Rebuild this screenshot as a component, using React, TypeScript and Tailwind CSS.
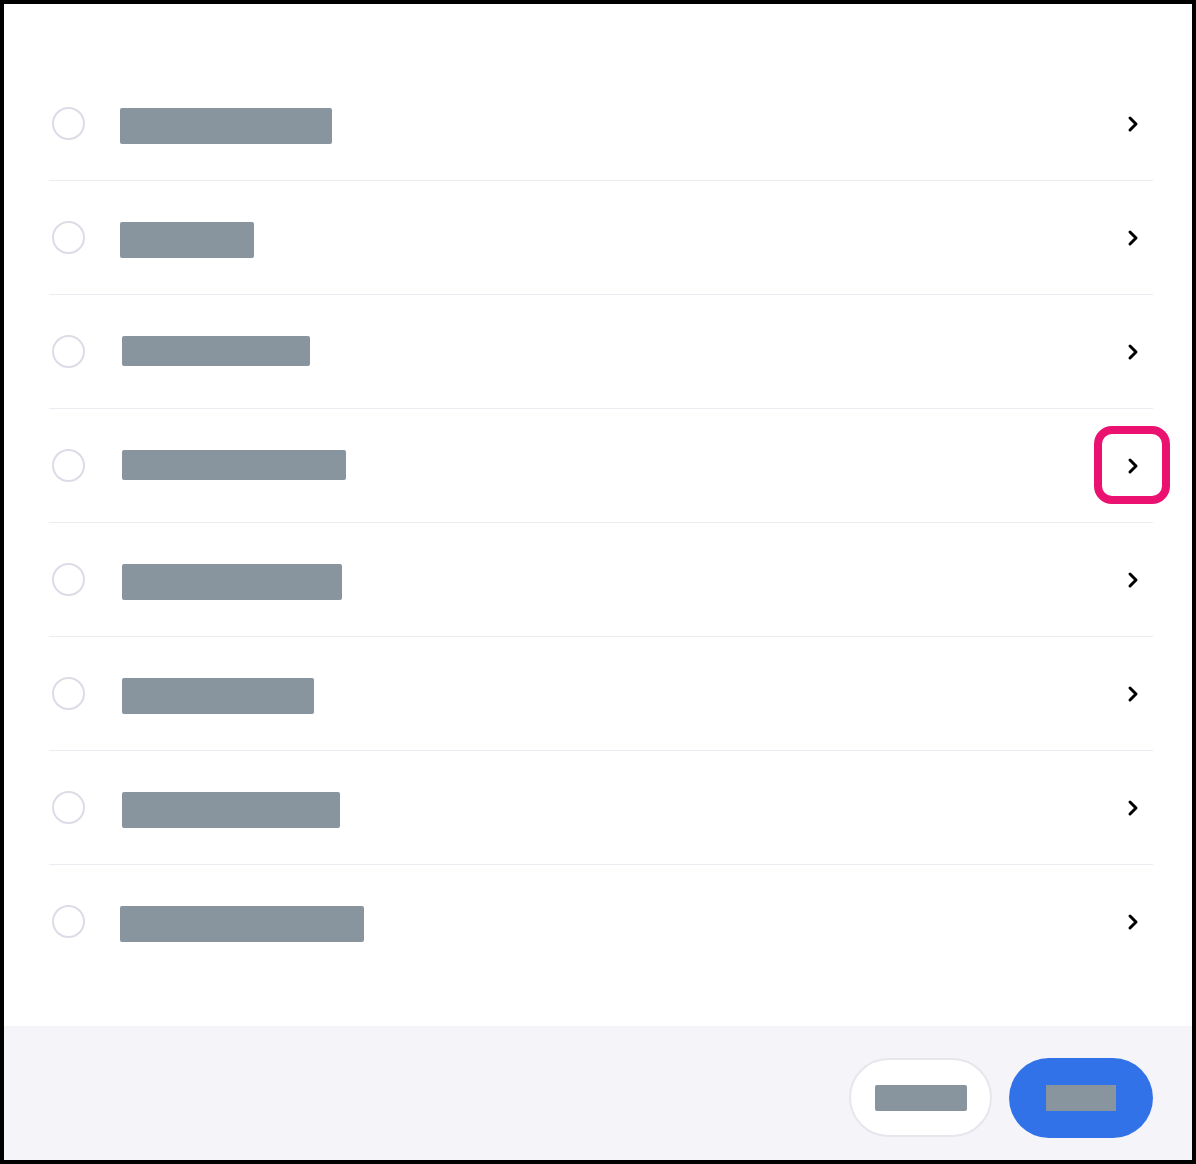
import React from "react";

const rows = [
  { ml: "ml-[35px]", w: "w-[212px]", h: "h-[36px]" },
  { ml: "ml-[35px]", w: "w-[134px]", h: "h-[36px]" },
  { ml: "ml-[37px]", w: "w-[188px]", h: "h-[30px]" },
  { ml: "ml-[37px]", w: "w-[224px]", h: "h-[30px]" },
  { ml: "ml-[37px]", w: "w-[220px]", h: "h-[36px]" },
  { ml: "ml-[37px]", w: "w-[192px]", h: "h-[36px]" },
  { ml: "ml-[37px]", w: "w-[218px]", h: "h-[36px]" },
  { ml: "ml-[35px]", w: "w-[244px]", h: "h-[36px]" },
];

function Chevron() {
  return (
    <svg width="12" height="18" viewBox="0 0 12 18" fill="none">
      <path d="M3 3 L9 9 L3 15" stroke="#000" strokeWidth="3" strokeLinecap="round" strokeLinejoin="round" />
    </svg>
  );
}

export default function App() {
  return (
    <div className="w-[1196px] h-[1164px] border-4 border-black bg-white flex flex-col font-['Liberation_Sans',sans-serif]">
      <div className="flex-1 pt-[63px] pl-[45px] pr-[39px]">
        {rows.map((r, i) => (
          <div
            key={i}
            className={`flex h-[114px] ${i < rows.length - 1 ? "border-b border-[#ebebf1]" : ""}`}
          >
            <div className="ml-[3px] mt-[40px] w-[33px] h-[33px] rounded-full border-2 border-[#dcdce7] shrink-0" />
            <div className={`${r.ml} mt-[41px] ${r.w} ${r.h} rounded-[2px] bg-[#88949e]`} />
            <div className="flex-1" />
            <div className="relative mr-[14px] mt-[48px] w-[12px] h-[18px]">
              <Chevron />
              {i === 3 && (
                <div className="absolute left-[-33px] top-[-31px] w-[76px] h-[78px] rounded-[18px] border-[8px] border-[#ea1170]" />
              )}
            </div>
          </div>
        ))}
      </div>
      <div className="h-[134px] bg-[#f5f5f9] flex justify-end items-start pt-[32px] pr-[39px] gap-[17px]">
        <div className="w-[143px] h-[79px] rounded-full bg-white border-2 border-[#e6e6ec] flex items-center justify-center">
          <div className="w-[92px] h-[26px] rounded-[2px] bg-[#88949e]" />
        </div>
        <div className="w-[144px] h-[80px] rounded-full bg-[#3272e8] flex items-center justify-center">
          <div className="w-[70px] h-[26px] bg-[#88949e]" />
        </div>
      </div>
    </div>
  );
}
